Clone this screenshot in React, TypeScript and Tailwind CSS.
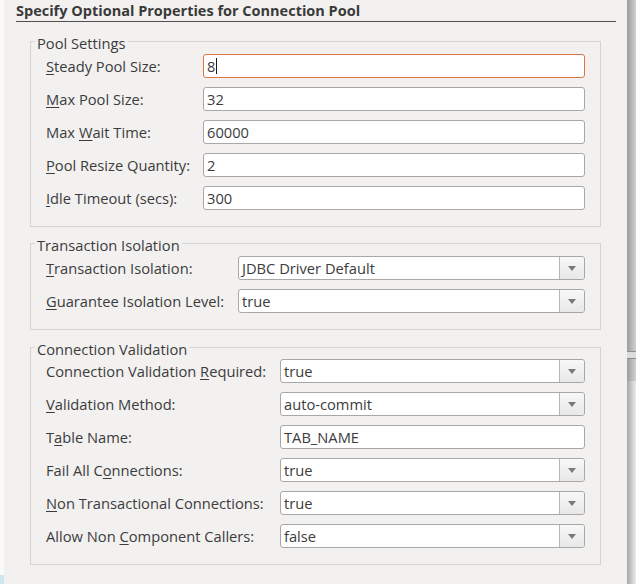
import React from "react";

const FONT = { fontFamily: '"Open Sans", "DejaVu Sans", sans-serif' };

type Row = {
  label: string;
  u: number;
  value: string;
  kind: "text" | "combo";
  focused?: boolean;
};

const POOL: Row[] = [
  { label: "Steady Pool Size:", u: 0, value: "8", kind: "text", focused: true },
  { label: "Max Pool Size:", u: 0, value: "32", kind: "text" },
  { label: "Max Wait Time:", u: 4, value: "60000", kind: "text" },
  { label: "Pool Resize Quantity:", u: 0, value: "2", kind: "text" },
  { label: "Idle Timeout (secs):", u: 0, value: "300", kind: "text" },
];

const TX: Row[] = [
  { label: "Transaction Isolation:", u: 0, value: "JDBC Driver Default", kind: "combo" },
  { label: "Guarantee Isolation Level:", u: 0, value: "true", kind: "combo" },
];

const VALIDATION: Row[] = [
  { label: "Connection Validation Required:", u: 22, value: "true", kind: "combo" },
  { label: "Validation Method:", u: 0, value: "auto-commit", kind: "combo" },
  { label: "Table Name:", u: 1, value: "TAB_NAME", kind: "text" },
  { label: "Fail All Connections:", u: 10, value: "true", kind: "combo" },
  { label: "Non Transactional Connections:", u: 0, value: "true", kind: "combo" },
  { label: "Allow Non Component Callers:", u: 10, value: "false", kind: "combo" },
];

function Mnemonic({ text, u }: { text: string; u: number }) {
  return (
    <span className="whitespace-pre">
      {text.slice(0, u)}
      <span className="underline underline-offset-[2px] decoration-1">{text[u]}</span>
      {text.slice(u + 1)}
    </span>
  );
}

function TextField({ value, focused }: { value: string; focused?: boolean }) {
  return (
    <div
      className={`flex h-[24px] items-center rounded-[3px] border bg-white pl-[3px] ${
        focused ? "border-[#d8764a]" : "border-[#a8a8a8]"
      }`}
    >
      <span>{value}</span>
      {focused && <span className="ml-px h-[16px] w-px bg-[#1a1a1a]" />}
    </div>
  );
}

function Combo({ value }: { value: string }) {
  return (
    <div className="flex h-[24px] rounded-[3px] border border-[#a8a8a8] bg-white">
      <div className="flex flex-1 items-center pl-[3px]">{value}</div>
      <div className="flex w-[25px] items-center justify-center rounded-r-[3px] border-l border-[#b6b6b6] bg-linear-to-b from-[#f8f8f8] to-[#e8e8e8]">
        <svg width="8" height="5" viewBox="0 0 8 5">
          <path d="M0 0H8L4 5Z" fill="#7a7a7a" />
        </svg>
      </div>
    </div>
  );
}

function Group({
  title,
  rows,
  cols,
  className,
}: {
  title: string;
  rows: Row[];
  cols: string;
  className: string;
}) {
  return (
    <fieldset
      className={`ml-[14px] w-[571px] border border-[#d6d4d1] px-[15px] pb-[16px] ${className}`}
    >
      <legend className="-ml-[11px] px-[2px] pt-[4px] leading-[16px]">{title}</legend>
      <div className={`grid ${cols} gap-y-[9px]`}>
        {rows.map((r) => (
          <React.Fragment key={r.label}>
            <div className="flex h-[24px] items-center">
              <Mnemonic text={r.label} u={r.u} />
            </div>
            {r.kind === "text" ? (
              <TextField value={r.value} focused={r.focused} />
            ) : (
              <Combo value={r.value} />
            )}
          </React.Fragment>
        ))}
      </div>
    </fieldset>
  );
}

export default function App() {
  return (
    <div
      style={FONT}
      className="flex h-[584px] w-[636px] overflow-hidden bg-[#f2f1f0] text-[14.7px] text-[#3c3c3c]"
    >
      <div className="flex w-[4px] flex-col bg-[#fafafa]">
        <div className="flex-1" />
        <div className="h-[9px] bg-[#cfe7f3]" />
      </div>

      <div className="flex-1 pl-[12px]">
        <div className="w-[600px] border-b border-[#4f4f4f] pb-[2px] pt-[3px] text-[14.5px] font-bold leading-[16px] text-[#3a3a3a]">
          Specify Optional Properties for Connection Pool
        </div>

        <Group title="Pool Settings" rows={POOL} cols="grid-cols-[157px_1fr]" className="mt-[9px] pt-[3px]" />
        <Group title="Transaction Isolation" rows={TX} cols="grid-cols-[192px_1fr]" className="mt-[6px] pt-[3px]" />
        <Group title="Connection Validation" rows={VALIDATION} cols="grid-cols-[234px_1fr]" className="mt-[7px] pt-[2px]" />
      </div>

      <div className="flex w-[9px] flex-col bg-linear-to-r from-[#9c9c9c] to-[#d2d2d2]">
        <div className="h-[351px]" />
        <div className="h-px bg-[#8e8e8e]" />
        <div className="h-[6px] bg-[#dcdcdc]" />
        <div className="h-px bg-[#8e8e8e]" />
        <div className="h-[22px]" />
        <div className="flex-1 bg-linear-to-r from-[#a8a8a8] to-[#ececec]" />
      </div>
    </div>
  );
}
